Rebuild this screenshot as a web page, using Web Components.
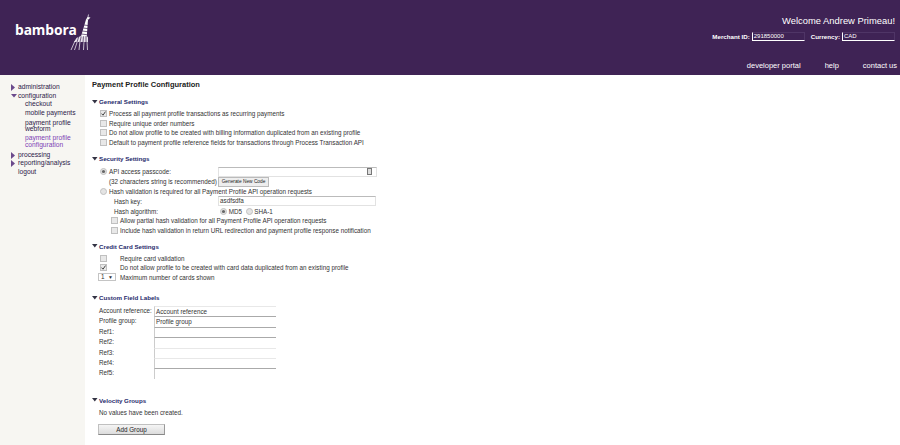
<!DOCTYPE html>
<html lang="en"><head><meta charset="utf-8"><title>Payment Profile Configuration</title>
<style>
html,body{margin:0;padding:0;background:#fff}
body{width:900px;height:445px;overflow:hidden;font:6.300px "Liberation Sans",Arial,sans-serif;color:#222}
</style></head><body>
<app-shell>
  <app-header slot="header"></app-header>
  <side-nav slot="nav"></side-nav>
  <h-title slot="main">Payment Profile Configuration</h-title>

  <config-section slot="main" heading="General Settings" top="7">
    <check-row checked>Process all payment profile transactions as recurring payments</check-row>
    <check-row>Require unique order numbers</check-row>
    <check-row>Do not allow profile to be created with billing information duplicated from an existing profile</check-row>
    <check-row>Default to payment profile reference fields for transactions through Process Transaction API</check-row>
  </config-section>

  <config-section slot="main" heading="Security Settings" top="7">
    <security-form></security-form>
  </config-section>

  <config-section slot="main" heading="Credit Card Settings" top="6">
    <card-form></card-form>
  </config-section>

  <config-section slot="main" heading="Custom Field Labels" top="11">
    <labels-form></labels-form>
  </config-section>

  <config-section slot="main" heading="Velocity Groups" top="17">
    <velocity-form></velocity-form>
  </config-section>
</app-shell>
<script>
const def=(name,html,init)=>customElements.define(name,class extends HTMLElement{
  constructor(){super();this.attachShadow({mode:'open'}).innerHTML=html;}
  connectedCallback(){init&&init.call(this,this.shadowRoot);}
});
const BOX=`<svg class="cb" width="7" height="7" viewBox="0 0 7 7"><rect x=".5" y=".5" width="6" height="6" fill="#e8e8e8" stroke="#c0c0c0"/><path class="tick" d="M1.500 3.600l1.500 1.600 2.500-3.600" fill="none" stroke="#444" stroke-width="1"/></svg>`;
const EMPTY=BOX.replace('class="tick"','class="tick" display="none"');
const RADIO=(on)=>`<svg width="7" height="7" viewBox="0 0 7 7"><circle cx="3.500" cy="3.500" r="3" fill="#e4e4e4" stroke="#c0c0c0"/>${on?'<circle cx="3.500" cy="3.500" r="1.600" fill="#666"/>':''}</svg>`;

def('app-shell',`<style>
:host{display:grid;grid-template-columns:85px 1fr;grid-template-rows:75px 370px;width:900px;height:445px;overflow:hidden}
.h{grid-column:1/3}
.n{background:#f7f6f2}
.m{padding:5px 0 0 7px;min-width:0}
</style><div class="h"><slot name="header"></slot></div><div class="n"><slot name="nav"></slot></div><div class="m"><slot name="main"></slot></div>`);

def('app-header',`<style>
:host{display:flex;justify-content:space-between;height:75px;background:#3f2355;color:#fff}
.logo{display:flex;align-items:flex-start;padding:14px 0 0 15px}
.word{font:700 13.800px/1 "Open Sans",sans-serif;letter-spacing:-.1px;margin-top:9px;width:55px;white-space:nowrap}
.r{display:flex;flex-direction:column;align-items:flex-end}
.w{font-size:9.400px;line-height:12px;margin:15px 5px 0 0}
.f{display:flex;align-items:center;margin:5px 5px 0 0;font-size:6.200px;font-weight:700;height:9px}
.v{box-sizing:border-box;height:9px;width:53px;margin:0 0 0 2px;border-left:1px solid #fff;border-bottom:1px solid #fff;border-top:1px solid #4f3566;border-right:1px solid #4f3566;font-size:6px;font-weight:400;line-height:7px;padding-left:1px;overflow:hidden}
.c{margin-left:6px}
.l{display:flex;margin-top:20px;font-size:7.500px;line-height:10px}
.l span{margin-left:24px}
.l .a{margin-left:0}
</style>
<div class="logo"><div class="word">bambora</div>
<svg width="22" height="37" viewBox="0 0 22 37" fill="none" stroke="#fff">
<path d="M1 36l4-9M4.500 36l3-9M9 36l1-9M13.500 36l.5-9M17.500 36l-.5-9" stroke-width=".7"/>
<path d="M4 28l2.500-4 5-2.500h5l1.500 2 0 4.500z" fill="#e8e3ec" stroke="none"/>
<path d="M7 28l2-6M10 28l1.500-7M13 28.500l.5-7M16 28.500v-7" stroke="#3f2355" stroke-width=".7"/>
<path d="M11 22.500L16 5.500l2 .3L16.800 22z" fill="#fff" stroke="none"/>
<path d="M11.500 20l6 .8M12.300 17l6 .8M13.200 14l5 .7M14 11l4.500 .6" stroke="#3f2355" stroke-width=".7"/>
<path d="M15.800 6l1.700-3 3 .5-2 2z" fill="#fff" stroke="none"/>
<path d="M18 3l.5-2.500" stroke-width=".7"/>
</svg></div>
<div class="r">
<div class="w">Welcome Andrew Primeau!</div>
<div class="f"><span>Merchant ID:</span><div class="v">291850000</div><span class="c">Currency:</span><div class="v">CAD</div></div>
<div class="l"><span class="a">developer portal</span><span>help</span><span style="margin-right:3px">contact us</span></div>
</div>`);

def('side-nav',`<style>
:host{display:block;padding:8px 0 0 11px;font-size:6.700px;line-height:8.500px;color:#2c2048}
</style><nav>
<nav-link arrow="right">administration</nav-link>
<nav-link arrow="down">configuration</nav-link>
<nav-link sub>checkout</nav-link>
<nav-link sub>mobile payments</nav-link>
<nav-link sub wrap>payment profile<br>webform</nav-link>
<nav-link sub wrap cur>payment profile<br>configuration</nav-link>
<nav-link arrow="right" after>processing</nav-link>
<nav-link arrow="right">reporting/analysis</nav-link>
<nav-link plain>logout</nav-link>
</nav>`);

def('nav-link',`<style>
:host{display:flex;align-items:flex-start;padding-left:7px;position:relative}
:host([sub]){padding-left:14px}
:host([wrap]){line-height:6.700px;padding-top:2.500px}
:host([after]){margin-top:2px}
:host([cur]){color:#7d3fb5}
svg{position:absolute;left:0;top:1px}
span{white-space:nowrap}
</style><span id="i"></span><span><slot></slot></span>`,function(r){
 const a=this.getAttribute('arrow');
 if(a==='right')r.getElementById('i').innerHTML='<svg width="4" height="7"><path d="M0 0l4 3.500L0 7z" fill="#6b4a8c"/></svg>';
 if(a==='down')r.getElementById('i').innerHTML='<svg width="6" height="4" style="left:-.5px;top:2px"><path d="M0 0h6L3 3.500z" fill="#6b4a8c"/></svg>';
});

def('h-title',`<style>:host{display:block;font-weight:700;font-size:7.500px;line-height:10px;color:#222}</style><slot></slot>`);

def('config-section',`<style>
:host{display:block}
h3{display:flex;align-items:center;margin:0;font-size:6.200px;line-height:9px;font-weight:700;color:#1f2a6b;height:9px}
svg{margin-right:1px}
.b{padding-left:6px;padding-top:3px}
</style><h3><svg width="6" height="4"><path d="M0 0h5.500L2.800 3.500z" fill="#334"/></svg><span id="t"></span></h3><div class="b"><slot></slot></div>`,function(r){
 r.getElementById('t').textContent=this.getAttribute('heading');
 this.style.marginTop=this.getAttribute('top')+'px';
});

def('check-row',`<style>
:host{display:flex;align-items:center;height:9.500px;padding-left:2px;font-size:6.300px;color:#333;white-space:nowrap}
svg{margin-right:2px;flex:none}
:host(:not([checked])) .tick{display:none}
</style>${BOX}<slot></slot>`);

const FIELD=`.i{box-sizing:border-box;border:1px solid #e2e2e2;border-top:1px solid #bbb;background:#fff;font-size:6.300px;line-height:8px;padding-left:1px;color:#333}`;
def('security-form',`<style>
:host{display:block;font-size:6.300px;color:#333;white-space:nowrap;padding-top:1px}
.r{display:flex;align-items:center;height:9.800px}
.o{padding-left:2px}
.o svg{margin-right:2px;flex:none}
.i{height:10px;width:159px;display:flex;justify-content:flex-end;align-items:center;padding-right:4px}
${FIELD}
.btn{font-size:4.800px;height:9.800px;box-sizing:border-box;border:1px solid #bbb;background:#eee;color:#222;line-height:8px;width:51px;text-align:center}
.c{padding-left:13px}
.c svg{margin-right:2px;flex:none}
.key{display:inline-block;width:3px;height:5px;border:1px solid #777;background:#ddd}
.lab{padding-left:16px;width:120px;box-sizing:border-box}
.alg{display:flex;align-items:center;padding-left:2px}
</style>
<div class="r o">${RADIO(1)}<span style="width:109px">API access passcode:</span><div class="i"><span class="key"></span></div></div>
<div class="r"><span style="padding-left:11px;width:120px;box-sizing:border-box">(32 characters string is recommended)</span><span class="btn">Generate New Code</span></div>
<div class="r o">${RADIO(0)}<span>Hash validation is required for all Payment Profile API operation requests</span></div>
<div class="r"><span class="lab">Hash key:</span><div class="i" style="width:158px;justify-content:flex-start">asdfsdfa</div></div>
<div class="r"><span class="lab">Hash algorithm:</span><span class="alg">${RADIO(1)}&nbsp;MD5&nbsp;&nbsp;${RADIO(0)}&nbsp;SHA-1</span></div>
<div class="r c">${EMPTY}Allow partial hash validation for all Payment Profile API operation requests</div>
<div class="r c">${EMPTY}Include hash validation in return URL redirection and payment profile response notification</div>`);

def('card-form',`<style>
:host{display:block;font-size:6.300px;color:#333;white-space:nowrap}
.r{display:flex;align-items:center;height:9.500px}
.b{width:22px;padding-left:2px;box-sizing:border-box;display:flex}
.s{box-sizing:border-box;width:18px;height:8px;border:1px solid #c4c4c4;margin-right:4px;font-size:6.300px;line-height:6px;display:flex;justify-content:space-between;padding:0 2px}
</style>
<div class="r"><span class="b">${EMPTY}</span>Require card validation</div>
<div class="r"><span class="b">${BOX}</span>Do not allow profile to be created with card data duplicated from an existing profile</div>
<div class="r"><span class="s">1<span style="font-size:5px">▼</span></span>Maximum number of cards shown</div>`);

def('labels-form',`<style>
:host{display:grid;grid-template-columns:55px 122px;grid-auto-rows:10.400px;font-size:6.300px;color:#333;white-space:nowrap;align-items:stretch;margin-left:1px;padding-top:1px}
span{line-height:10px}
.i{box-sizing:border-box;border-top:1px solid #aaa;border-left:1px solid #ccc;padding-left:1px;line-height:9px;color:#333;background:#fff}
.l{border-top-color:#e8e8e8}
</style>
<span>Account reference:</span><div class="i l">Account reference</div>
<span>Profile group:</span><div class="i">Profile group</div>
<span>Ref1:</span><div class="i"></div>
<span>Ref2:</span><div class="i"></div>
<span>Ref3:</span><div class="i l"></div>
<span>Ref4:</span><div class="i l"></div>
<span>Ref5:</span><div class="i"></div>`);

def('velocity-form',`<style>
:host{display:block;font-size:6.300px;color:#333;padding-left:1px}
p{margin:0;line-height:10px}
button{display:block;box-sizing:border-box;width:67px;height:11.500px;margin:6px 0 0 -1px;border:1px solid #c0c0c0;border-bottom-color:#888;border-right-color:#999;background:linear-gradient(#f5f5f5,#dcdcdc);font:6.300px "Liberation Sans",Arial,sans-serif;color:#222;padding:0}
</style><p>No values have been created.</p><button>Add Group</button>`);
</script>
</body></html>
